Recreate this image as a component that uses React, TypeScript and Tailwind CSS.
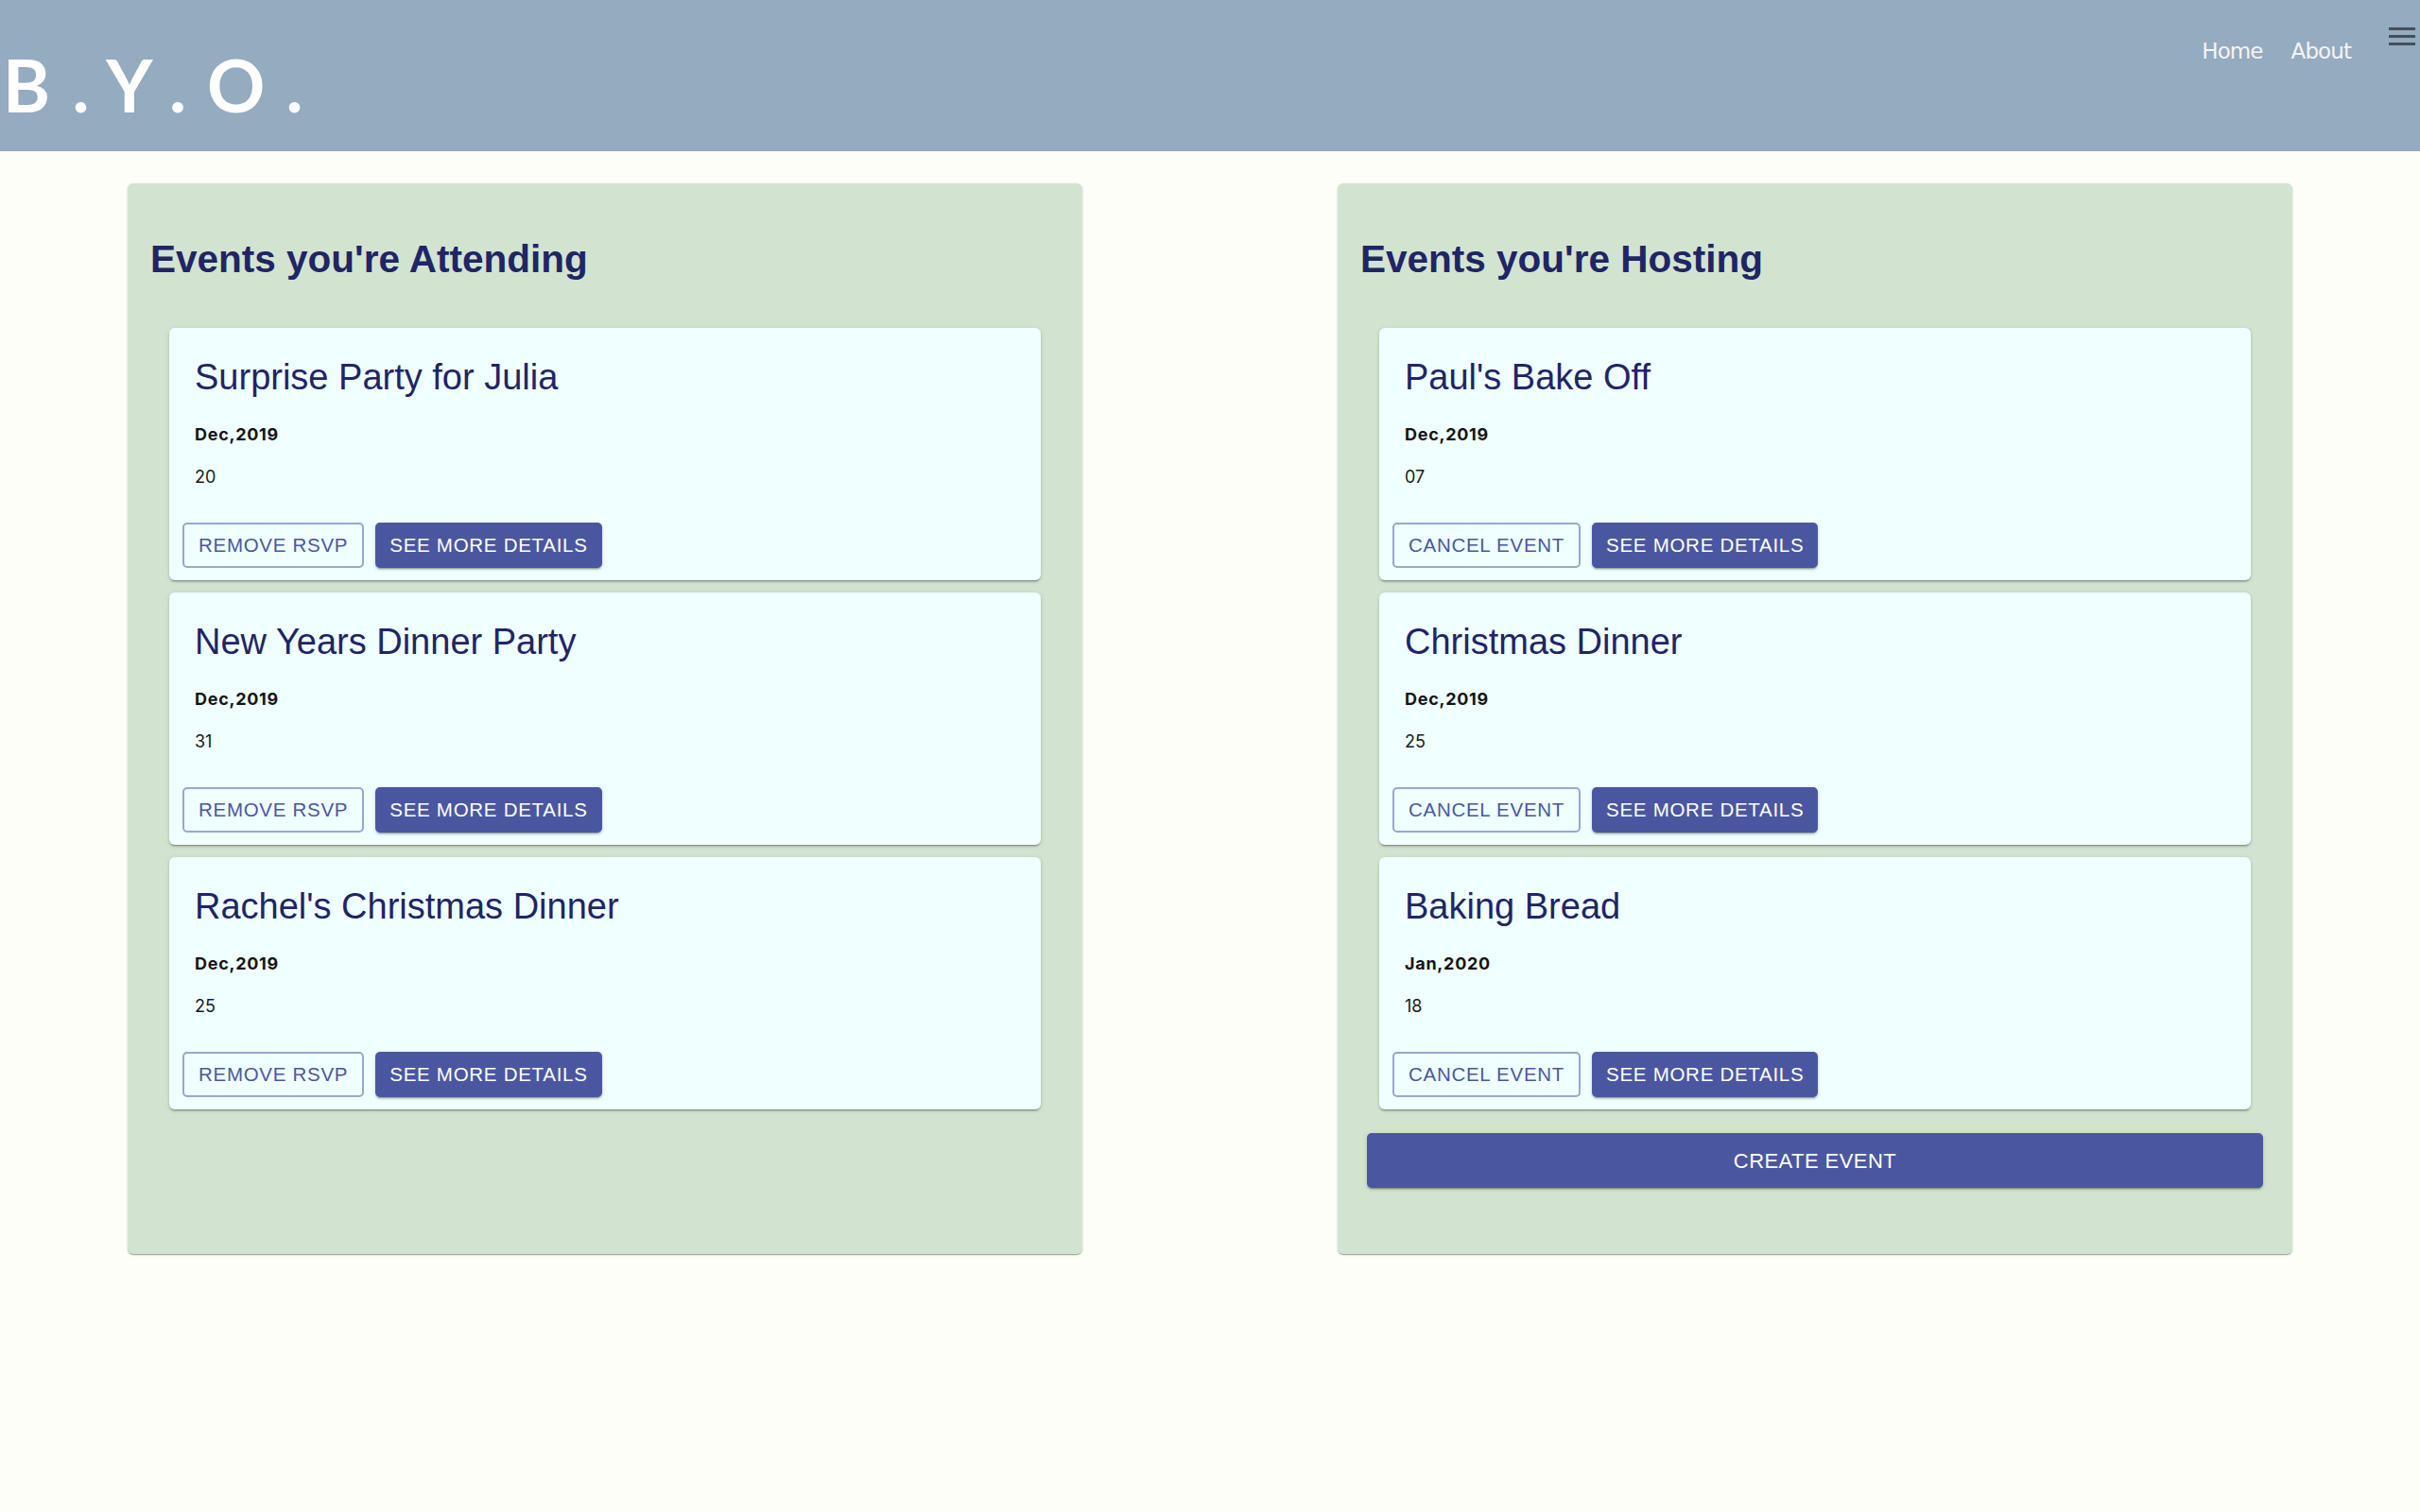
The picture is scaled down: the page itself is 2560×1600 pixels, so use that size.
import React from 'react';

type EventItem = {
  title: string;
  month: string;
  day: string;
};

const attending: EventItem[] = [
  { title: 'Surprise Party for Julia', month: 'Dec,2019', day: '20' },
  { title: 'New Years Dinner Party', month: 'Dec,2019', day: '31' },
  { title: "Rachel's Christmas Dinner", month: 'Dec,2019', day: '25' },
];

const hosting: EventItem[] = [
  { title: "Paul's Bake Off", month: 'Dec,2019', day: '07' },
  { title: 'Christmas Dinner', month: 'Dec,2019', day: '25' },
  { title: 'Baking Bread', month: 'Jan,2020', day: '18' },
];

const EventCard = ({ event, action }: { event: EventItem; action: string }) => {
  return (
    <div className="bg-[#f0ffff] rounded-md pt-[30px] pb-[13px] shadow-[0px_3px_1px_-2px_rgba(0,0,0,0.2),0px_2px_2px_0px_rgba(0,0,0,0.14),0px_1px_5px_0px_rgba(0,0,0,0.12)]">
      <h2 className="px-[27px] font-['Liberation_Sans',Arial,sans-serif] text-[38px] leading-[44px] text-[#1f2566]">
        {event.title}
      </h2>
      <p className="px-[27px] mt-[27px] font-['Inter',sans-serif] font-bold text-[18px] leading-[24px] text-[#151515] tracking-[0.04em]">
        {event.month}
      </p>
      <p className="px-[27px] mt-[21px] font-['Inter',sans-serif] text-[18px] leading-[24px] text-[#1a1a1a]">
        {event.day}
      </p>
      <div className="flex gap-[12px] px-[14px] mt-[36px]">
        <button className="h-[48px] px-[15px] rounded-[5px] border-2 border-[#9ba6d1] text-[#4a57a0] font-['Liberation_Sans',Arial,sans-serif] text-[20.5px] tracking-[0.035em] uppercase">
          {action}
        </button>
        <button className="h-[48px] px-[15px] rounded-[5px] bg-[#4a57a0] text-white font-['Liberation_Sans',Arial,sans-serif] text-[20.5px] tracking-[0.035em] uppercase shadow-[0px_3px_1px_-2px_rgba(0,0,0,0.2),0px_2px_2px_0px_rgba(0,0,0,0.14),0px_1px_5px_0px_rgba(0,0,0,0.12)]">
          See More Details
        </button>
      </div>
    </div>
  );
};

const Panel = ({
  heading,
  events,
  action,
  children,
}: {
  heading: string;
  events: EventItem[];
  action: string;
  children?: React.ReactNode;
}) => {
  return (
    <section className="w-[1010px] bg-[#d2e4d0] rounded-md pb-[70px] shadow-[0px_2px_1px_-1px_rgba(0,0,0,0.2),0px_1px_1px_0px_rgba(0,0,0,0.14),0px_1px_3px_0px_rgba(0,0,0,0.12)]">
      <h1 className="pl-[24px] pt-[57px] font-['Liberation_Sans',Arial,sans-serif] font-bold text-[40.5px] leading-[46px] text-[#1f2566]">
        {heading}
      </h1>
      <div className="mt-[50px] px-[44px] flex flex-col gap-[13px]">
        {events.map((e) => (
          <EventCard key={e.title} event={e} action={action} />
        ))}
      </div>
      {children}
    </section>
  );
};

export default function App() {
  return (
    <div className="min-h-screen bg-[#fdfef8]">
      {/* header */}
      <header className="h-[160px] bg-[#94abc0] flex justify-between items-start">
        <div className="pl-[3px] mt-[52px] font-['Lato',sans-serif] font-bold text-[76px] leading-none text-white tracking-[0.31em]">
          B.Y.O.
        </div>
        <nav className="flex items-start">
          <div className="flex gap-[30px] mt-[40px] font-['DejaVu_Sans',Verdana,sans-serif] text-[23px] leading-[28px] text-[#f4f4f4] tracking-[-0.04em]">
            <a href="#">Home</a>
            <a href="#">About</a>
          </div>
          <svg className="mt-[29px] ml-[40px] mr-[5px]" width="28" height="20" viewBox="0 0 28 20">
            <rect x="0" y="0" width="28" height="3" fill="#454f5a" />
            <rect x="0" y="8" width="28" height="3" fill="#454f5a" />
            <rect x="0" y="16" width="28" height="3" fill="#454f5a" />
          </svg>
        </nav>
      </header>

      <main className="flex justify-around items-stretch pt-[34px]">
        <Panel heading="Events you're Attending" events={attending} action="Remove RSVP" />
        <Panel heading="Events you're Hosting" events={hosting} action="Cancel Event">
          <div className="px-[31px] mt-[25px]">
            <button className="w-full h-[58px] rounded-[5px] bg-[#4a57a0] text-white font-['Liberation_Sans',Arial,sans-serif] text-[22px] tracking-[0.02em] uppercase shadow-[0px_3px_1px_-2px_rgba(0,0,0,0.2),0px_2px_2px_0px_rgba(0,0,0,0.14),0px_1px_5px_0px_rgba(0,0,0,0.12)]">
              Create Event
            </button>
          </div>
        </Panel>
      </main>
    </div>
  );
}
